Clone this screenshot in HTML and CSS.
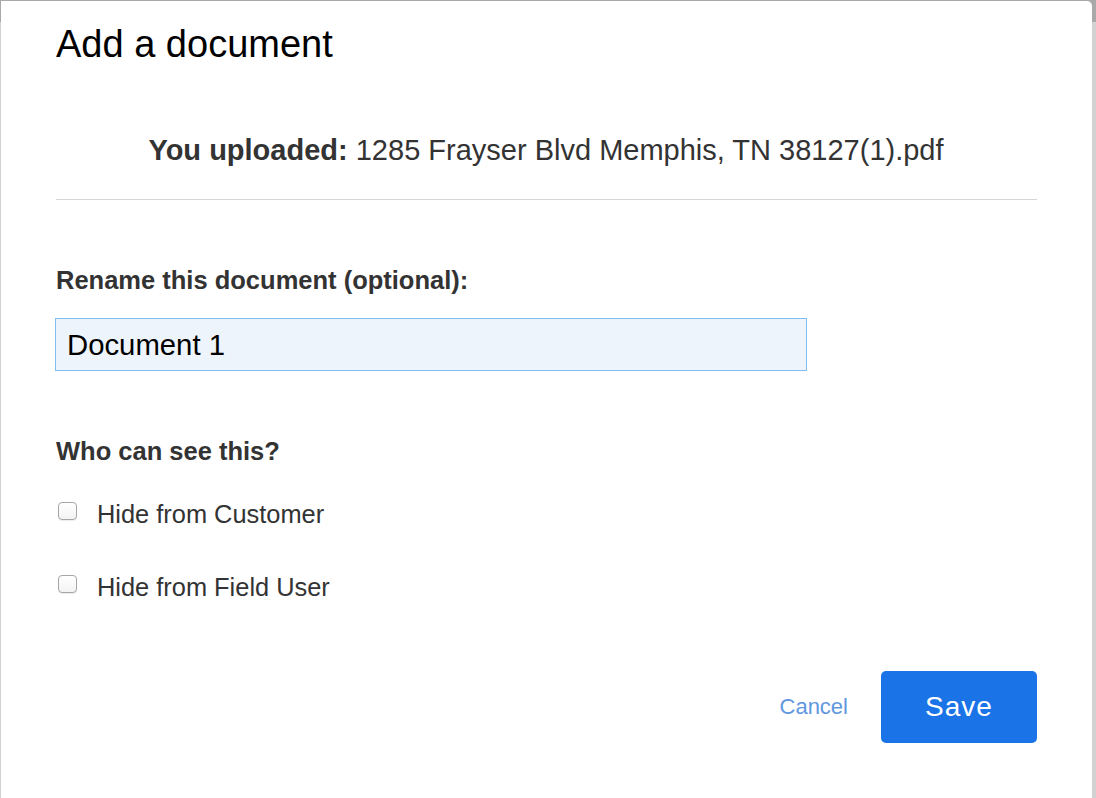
FILE: index.html
```html
<!DOCTYPE html>
<html lang="en">
<head>
<meta charset="utf-8">
<title>Add a document</title>
<link rel="stylesheet" href="styles.css">
</head>
<body>
<div class="modal">
  <h1 class="modal-title">Add a document</h1>
  <p class="uploaded"><strong>You uploaded:</strong> 1285 Frayser Blvd Memphis, TN 38127(1).pdf</p>
  <hr class="divider">
  <label class="field-label rename" for="docname">Rename this document (optional):</label>
  <input class="text-input" id="docname" type="text" value="Document 1">
  <div class="field-label who">Who can see this?</div>
  <label class="check-row first"><span class="checkbox"></span><span class="check-text">Hide from Customer</span></label>
  <label class="check-row second"><span class="checkbox"></span><span class="check-text">Hide from Field User</span></label>
  <div class="footer">
    <a class="cancel" href="#">Cancel</a>
    <button class="save" type="button">Save</button>
  </div>
</div>
</body>
</html>
```

FILE: styles.css
```css
html, body {
  margin: 0;
  padding: 0;
  height: 798px;
  overflow: hidden;
}

body {
  background: linear-gradient(to bottom, #a9a9a9 0, #a9a9a9 22px, #d2d2d2 22px, #d2d2d2 100%);
  font-family: "Liberation Sans", Arial, Helvetica, sans-serif;
}

.modal {
  box-sizing: border-box;
  margin: 1px 0 0 1px;
  width: 1091px;
  height: 797px;
  background: #ffffff;
  border-top-right-radius: 5px;
  padding: 20px 55px 0 54px;
  display: flex;
  flex-direction: column;
}

.modal-title {
  margin: 0 0 0 1px;
  font-size: 38px;
  line-height: 46px;
  font-weight: normal;
  color: #000;
}

.uploaded {
  margin: 66px 0 0;
  font-size: 29px;
  line-height: 34px;
  text-align: center;
  color: #333;
}

.uploaded strong {
  font-weight: bold;
}

.divider {
  margin: 32px 0 0 1px;
  border: 0;
  height: 1px;
  background: #d6d6d6;
}

.field-label {
  display: block;
  margin-left: 1px;
  font-size: 25.5px;
  line-height: 30px;
  font-weight: bold;
  color: #333;
}

.rename {
  margin-top: 65px;
}

.text-input {
  box-sizing: border-box;
  margin: 23px 0 0;
  width: 752px;
  height: 53px;
  border: 1px solid #80bdf0;
  background: #edf4fc;
  padding: 0 11px;
  font-family: "Liberation Sans", Arial, Helvetica, sans-serif;
  font-size: 29.3px;
  color: #000;
  outline: none;
  border-radius: 0;
}

.who {
  margin-top: 65px;
}

.check-row {
  display: flex;
  align-items: flex-start;
  font-size: 25.4px;
  line-height: 30px;
  color: #333;
}

.check-row.first {
  margin-top: 33px;
}

.check-row.second {
  margin-top: 43px;
}

.checkbox {
  box-sizing: border-box;
  width: 19px;
  height: 18px;
  margin: 3px 0 0 3px;
  border: 1px solid #a6a6a6;
  border-radius: 4px;
  background: linear-gradient(#ffffff, #f3f3f3);
  box-shadow: 0 1px 1px rgba(0,0,0,0.08);
  flex: none;
}

.check-text {
  margin-left: 20px;
}

.footer {
  margin-top: 69px;
  display: flex;
  justify-content: flex-end;
  align-items: center;
}

.cancel {
  font-size: 22px;
  line-height: 26px;
  color: #6197e0;
  text-decoration: none;
  margin-right: 33px;
}

.save {
  box-sizing: border-box;
  width: 156px;
  height: 72px;
  border: 0;
  border-radius: 5px;
  background: #1b74e7;
  color: #fff;
  font-family: "Liberation Sans", Arial, Helvetica, sans-serif;
  font-size: 28px;
  line-height: 72px;
  letter-spacing: 1px;
  padding: 0;
}
```
